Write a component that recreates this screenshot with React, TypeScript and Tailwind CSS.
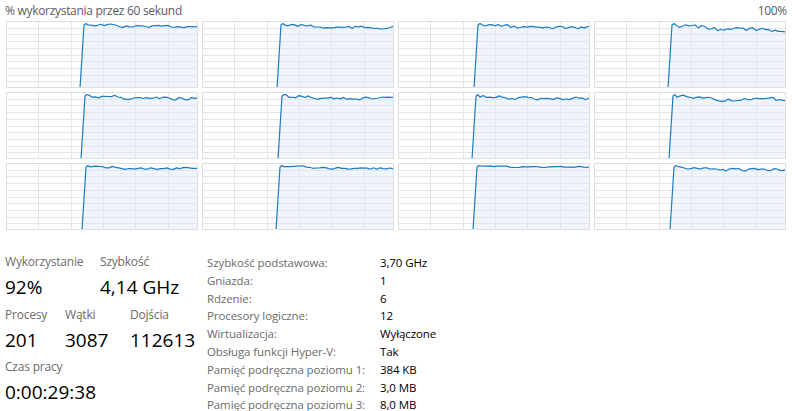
import React from "react";

const W = 192;
const H = 67;

function rng(seed: number) {
  let s = seed;
  return () => {
    s = (s * 9301 + 49297) % 233280;
    return s / 233280;
  };
}

const amps = [3, 4, 4, 6, 4, 4, 4, 5, 3, 3, 1.5, 4];

function series(i: number) {
  const r = rng(i * 97 + 13);
  const pts: [number, number][] = [];
  const jump = 74 + (i % 3);
  pts.push([jump, H]);
  pts.push([jump + 4, 4]);
  pts.push([jump + 6, 2.5]);
  let x = jump + 8;
  let y = 2.5;
  while (x < W) {
    const target = 2.5 + r() * amps[i] + (x > 110 ? amps[i] * 0.5 : 0);
    y = y * 0.3 + target * 0.7;
    pts.push([x, y]);
    x += 3.2;
  }
  pts.push([W, y]);
  return { pts, jump };
}

function Graph({ i }: { i: number }) {
  const { pts, jump } = series(i);
  const line = pts.map((p) => `${p[0].toFixed(1)},${p[1].toFixed(1)}`).join(" ");
  const fill = `${jump},${H} ${line} ${W},${H}`;
  const vx = [32, 65, 97, 129, 162];
  const hy = Array.from({ length: 9 }, (_, k) => Math.round(((k + 1) * H) / 10) + 0.5);
  return (
    <div className="w-[192px] h-[67px] border border-[#dedede] bg-white">
      <svg width={190} height={65} viewBox="1 1 190 65" className="block">
        <polygon points={fill} fill="#f0f4fc" />
        {hy.map((y) => (
          <line key={y} x1={0} x2={W} y1={y} y2={y} stroke="#e3e5ea" strokeWidth={1} />
        ))}
        {vx.map((x) => (
          <line key={x} x1={x + 0.5} x2={x + 0.5} y1={0} y2={H} stroke="#e3e5ea" strokeWidth={1} />
        ))}
        <polyline points={line} fill="none" stroke="#1a7cc1" strokeWidth={1.2} strokeLinejoin="round" />
      </svg>
    </div>
  );
}

const rows: [string, string][] = [
  ["Szybkość podstawowa:", "3,70 GHz"],
  ["Gniazda:", "1"],
  ["Rdzenie:", "6"],
  ["Procesory logiczne:", "12"],
  ["Wirtualizacja:", "Wyłączone"],
  ["Obsługa funkcji Hyper-V:", "Tak"],
  ["Pamięć podręczna poziomu 1:", "384 KB"],
  ["Pamięć podręczna poziomu 2:", "3,0 MB"],
  ["Pamięć podręczna poziomu 3:", "8,0 MB"],
];

function Stat({ label, value, w }: { label: string; value: string; w: string }) {
  return (
    <div className={w}>
      <div className="text-[12px] leading-[16px] tracking-[-0.2px] text-[#6b6b6b]">{label}</div>
      <div className="text-[19px] leading-[24px] text-black mt-[5px]">{value}</div>
    </div>
  );
}

export default function App() {
  return (
    <div
      className="w-[792px] h-[411px] bg-white overflow-hidden relative"
      style={{ fontFamily: "'Open Sans', 'Noto Sans', sans-serif" }}
    >
      <div className="flex justify-between px-[5px] pt-[3px] h-[21px] text-[12px] leading-[16px] tracking-[-0.3px] text-[#5c5c5c]">
        <span>% wykorzystania przez 60 sekund</span>
        <span>100%</span>
      </div>
      <div className="grid grid-cols-[repeat(4,192px)] gap-x-[4px] gap-y-[4px] px-[6px]">
        {Array.from({ length: 12 }, (_, i) => (
          <Graph key={i} i={i} />
        ))}
      </div>
      <div className="flex mt-[24px]">
        <div className="pl-[5px] w-[202px]">
          <div className="flex">
            <Stat label="Wykorzystanie" value="92%" w="w-[95px]" />
            <Stat label="Szybkość" value="4,14 GHz" w="w-[100px]" />
          </div>
          <div className="flex mt-[8px]">
            <Stat label="Procesy" value="201" w="w-[60px]" />
            <Stat label="Wątki" value="3087" w="w-[65px]" />
            <Stat label="Dojścia" value="112613" w="w-[70px]" />
          </div>
          <div className="flex mt-[7px]">
            <Stat label="Czas pracy" value="0:00:29:38" w="w-[150px]" />
          </div>
        </div>
        <div className="pl-[5px] mt-[0px] text-[11.5px] leading-[17.8px] tracking-[-0.1px]">
          {rows.map(([k, v]) => (
            <div key={k} className="flex">
              <span className="w-[173px] text-[#6b6b6b]">{k}</span>
              <span className="text-black">{v}</span>
            </div>
          ))}
        </div>
      </div>
    </div>
  );
}
